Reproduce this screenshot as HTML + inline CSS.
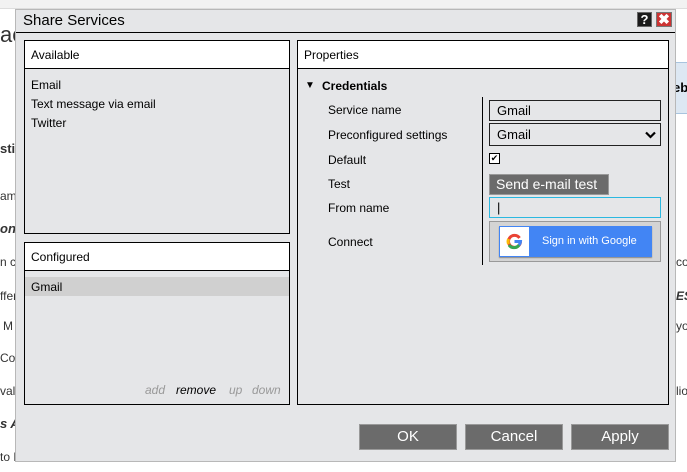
<!DOCTYPE html>
<html><head><style>
*{margin:0;padding:0;box-sizing:border-box}
body{width:687px;height:472px;overflow:hidden;background:#fff;font-family:"Liberation Sans",Arial,sans-serif;font-size:12px;color:#000;position:relative}
.a{position:absolute;white-space:nowrap}
.bg{color:#333;font-size:12px}
#dlg{position:absolute;left:15px;top:9px;width:661px;height:453px;background:#e5e6e8;border:1px solid #b8b8b8}
.panel{position:absolute;border:1px solid #000;background:#e5e6e8}
.hdr{height:28px;background:#fff;border-bottom:1px solid #000;padding:7px 6px;font-size:12px}
.btn{position:absolute;top:414px;width:98px;height:26px;background:#6b6b6b;border:1px solid #999;color:#fff;font-size:15px;text-align:center;line-height:24px}
.lbl{position:absolute;left:30px;font-size:12px}
.fld{position:absolute;left:191px;width:172px;border:1px solid #222;background:#e5e6e8;font-size:13px;padding-left:7px}
</style></head><body>
<div style="position:absolute;left:0;top:0;width:687px;height:9px;background:#f2f2f2;border-bottom:1px solid #ddd"></div>
<div class="a bg" style="left:0;top:22px;font-size:22px">ac</div>
<div class="a bg" style="left:0;top:141px;font-weight:bold;font-size:13px">stin</div>
<div class="a bg" style="left:0;top:189px">ame</div>
<div class="a bg" style="left:0;top:221px;font-weight:bold;font-style:italic;font-size:13px">on</div>
<div class="a bg" style="left:0;top:255px">n c</div>
<div class="a bg" style="left:0;top:289px">ffer</div>
<div class="a bg" style="left:3px;top:319px">M</div>
<div class="a bg" style="left:0;top:351px">Co</div>
<div class="a bg" style="left:0;top:384px">valu</div>
<div class="a bg" style="left:0;top:416px;font-weight:bold;font-style:italic;font-size:13px">s A</div>
<div class="a bg" style="left:0;top:450px">to Pass an Eval</div>
<div style="position:absolute;left:668px;top:62px;width:19px;height:52px;background:#dde8f3;border-top:1px solid #a8c4de;border-bottom:1px solid #a8c4de"></div>
<div class="a" style="left:673px;top:80px;font-weight:bold;font-size:13px">eb</div>
<div class="a bg" style="left:676px;top:255px">co</div>
<div class="a bg" style="left:676px;top:289px;font-weight:bold;font-style:italic">ES</div>
<div class="a bg" style="left:676px;top:319px">yo</div>
<div class="a bg" style="left:676px;top:384px">lio</div>

<div id="dlg">
 <div class="a" style="left:7px;top:2px;font-size:15px">Share Services</div>
 <div style="position:absolute;left:621px;top:2px;width:15px;height:15px;background:#1a1a1a;border:1px solid #666;color:#fff;font-weight:bold;font-size:13px;text-align:center;line-height:13px">?</div>
 <div style="position:absolute;left:640px;top:2px;width:16px;height:15px;background:#c33;border:1px solid #777;color:#fff;font-weight:bold;font-size:14px;text-align:center;line-height:13px">✖</div>
 <div style="position:absolute;left:0;top:22px;width:659px;height:1px;background:#000"></div>

 <div class="panel" style="left:8px;top:30px;width:266px;height:194px">
  <div class="hdr">Available</div>
  <div class="a" style="left:6px;top:37px">Email</div>
  <div class="a" style="left:6px;top:56px">Text message via email</div>
  <div class="a" style="left:6px;top:75px">Twitter</div>
 </div>
 <div class="panel" style="left:8px;top:232px;width:266px;height:163px">
  <div class="hdr">Configured</div>
  <div style="position:absolute;left:0;top:34px;width:264px;height:19px;background:#d0d0d0"></div>
  <div class="a" style="left:6px;top:37px">Gmail</div>
  <div class="a" style="left:120px;top:140px;font-style:italic;color:#999">add</div>
  <div class="a" style="left:151px;top:140px;font-style:italic;color:#000">remove</div>
  <div class="a" style="left:204px;top:140px;font-style:italic;color:#999">up</div>
  <div class="a" style="left:227px;top:140px;font-style:italic;color:#999">down</div>
 </div>
 <div class="panel" style="left:281px;top:30px;width:372px;height:365px">
  <div class="hdr">Properties</div>
  <div class="a" style="left:7px;top:39px;font-size:10px">▼</div>
  <div class="a" style="left:24px;top:38px;font-weight:bold">Credentials</div>
  <div class="lbl" style="top:62px">Service name</div>
  <div class="lbl" style="top:87px">Preconfigured settings</div>
  <div class="lbl" style="top:112px">Default</div>
  <div class="lbl" style="top:136px">Test</div>
  <div class="lbl" style="top:160px">From name</div>
  <div class="lbl" style="top:194px">Connect</div>
  <div style="position:absolute;left:184px;top:56px;width:1px;height:168px;background:#000"></div>
  <div class="fld" style="top:59px;height:21px;line-height:19px">Gmail</div>
  <div class="fld" style="top:82px;height:23px;line-height:21px">Gmail<svg style="position:absolute;right:4px;top:7px" width="11" height="8" viewBox="0 0 11 8"><path d="M1 1.5 L5.5 6 L10 1.5" fill="none" stroke="#000" stroke-width="2.2"/></svg></div>
  <div style="position:absolute;left:191px;top:112px;width:11px;height:11px;border:1px solid #000;background:#fff;font-size:9px;line-height:9px;text-align:center">✔</div>
  <div style="position:absolute;left:191px;top:133px;width:120px;height:21px;background:#6b6b6b;border:1px solid #999;color:#fff;font-size:14px;line-height:19px;padding-left:6px">Send e-mail test</div>
  <div class="fld" style="top:156px;height:21px;border-color:#2bb8e0;line-height:19px">|</div>
  <div style="position:absolute;left:191px;top:180px;width:172px;height:41px;background:#d4d4d4;border:1px solid #999">
   <div style="position:absolute;left:9px;top:4px;width:153px;height:31px;background:#4285f4;box-shadow:0 1px 1px #888">
    <div style="position:absolute;left:1px;top:1px;width:29px;height:29px;background:#fff">
     <svg width="29" height="29" viewBox="0 0 29 29"><g fill="none" stroke-width="3"><path d="M19.5 11 A6 6 0 1 0 20.5 15" stroke="#ea4335"/><path d="M8.6 12 A6 6 0 0 0 8.6 17" stroke="#fbbc05"/><path d="M9 18 A6 6 0 0 0 19 18" stroke="#34a853"/><path d="M14.5 14.5 H20.5 A6 6 0 0 1 19 18" stroke="#4285f4"/></g></svg>
    </div>
    <div class="a" style="left:43px;top:9px;color:#fff;font-size:11px">Sign in with Google</div>
   </div>
  </div>
 </div>
 <div class="btn" style="left:343px">OK</div>
 <div class="btn" style="left:449px">Cancel</div>
 <div class="btn" style="left:555px">Apply</div>
</div>
</body></html>
